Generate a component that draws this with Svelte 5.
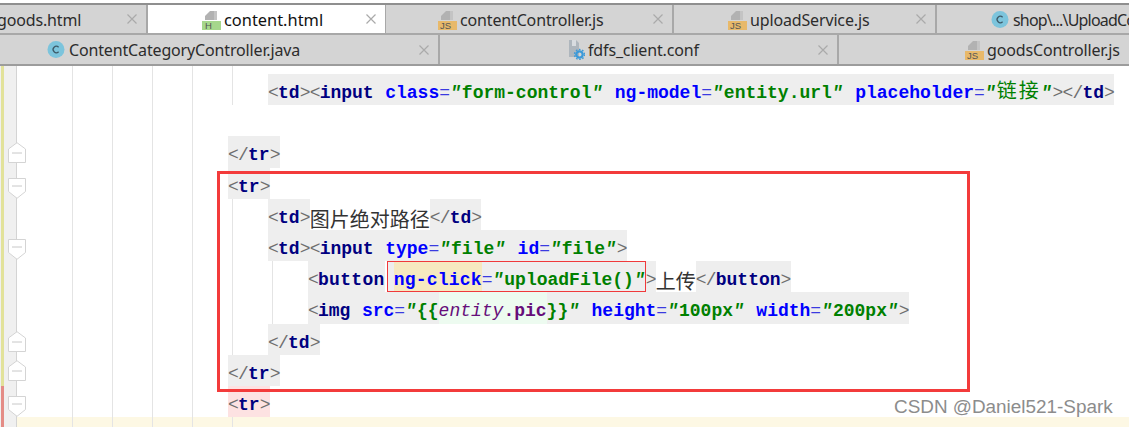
<script>
  const row1 = [
    { w: 148, pad: -3, name: 'goods.html', close: true },
    { w: 238, pad: 54, name: 'content.html', icon: 'H', close: true, active: true },
    { w: 288, pad: 52, name: 'contentController.js', icon: 'JS', close: true },
    { w: 263, pad: 54, name: 'uploadService.js', icon: 'JS', close: true },
    { w: 200, pad: 54, name: 'shop\\...\\UploadController.java', icon: 'C', tight: true }
  ];
  const row2 = [
    { w: 440, pad: 47, name: 'ContentCategoryController.java', icon: 'C', close: true },
    { w: 399, pad: 129, name: 'fdfs_client.conf', icon: 'G', close: true },
    { w: 300, pad: 126, name: 'goodsController.js', icon: 'JS' }
  ];

  const open = (n) => [['p', '<'], ['n', n]];
  const shut = (n) => [['p', '</'], ['n', n], ['p', '>']];
  const gt = ['p', '>'];
  const attr = (a, v) => [['a', a], ['e', '='], ['q', '"'], ['v', v], ['q', '"']];
  const sp = ['s', ' '];

  const lines = [
    { h: 8, g: 1 },
    { x: 241, g: 1, segs: [{ t: 'grey', toks: [['p', '<'], ['n', 'td'], gt, ['p', '<'], ['n', 'input'], sp, ...attr('class', 'form-control'), sp, ...attr('ng-model', 'entity.url'), sp, ['a', 'placeholder'], ['e', '='], ['q', '"'], ['vc', '链接'], ['q', '"'], gt, ...shut('td')] }] },
    { g: 0 },
    { x: 201, fold: 'up', segs: [{ t: 'grey', toks: shut('tr') }] },
    { x: 201, fold: 'down', segs: [{ t: 'grey', toks: [...open('tr'), gt] }] },
    { x: 241, g: 1, segs: [{ t: 'grey', toks: [...open('td'), gt] }, { t: 'plain', toks: [['c', '图片绝对路径']] }, { t: 'grey', toks: shut('td') }] },
    { x: 241, g: 1, fold: 'down2', segs: [{ t: 'grey', toks: [...open('td'), gt, ...open('input'), sp, ...attr('type', 'file'), sp, ...attr('id', 'file'), gt] }] },
    { x: 281, g: 2, segs: [
      { t: 'grey', toks: [['p', '<'], ['nw', 'button']] },
      { t: 'match', parts: [{ t: 'grey', toks: [sp] }, { t: 'hit', toks: [['a', 'ng-click']] }, { t: 'grey', toks: attr('', 'uploadFile()').slice(1) }] },
      { t: 'grey', toks: [gt] },
      { t: 'plain', toks: [['c', '上传']] },
      { t: 'grey', toks: shut('button') }
    ] },
    { x: 281, g: 2, segs: [
      { t: 'grey', toks: [...open('img'), sp, ['a', 'src'], ['e', '='], ['q', '"'], ['v', '{{']] },
      { t: 'mint', toks: [['i', 'entity'], ['k', '.pic']] },
      { t: 'grey', toks: [['v', '}}'], ['q', '"'], sp, ...attr('height', '100px'), sp, ...attr('width', '200px'), gt] }
    ] },
    { x: 241, g: 1, fold: 'up2', segs: [{ t: 'grey', toks: shut('td') }] },
    { x: 201, g: 1, fold: 'up3', segs: [{ t: 'grey', toks: shut('tr') }] },
    { x: 201, g: 1, pink: true, fold: 'down3', segs: [{ t: 'pinkbg', toks: [...open('tr'), gt] }] },
    { g: 1, pink: true, cur: true, h: 12 }
  ];
</script>

{#snippet fileicon(kind)}
  {#if kind === 'C'}
    <svg class="ic" width="19" height="19" viewBox="0 0 19 19"><circle cx="9" cy="9.5" r="8.5" fill="#7cc4dc" /><path d="M11.6 7.2a3.2 3.2 0 1 0 0 4.6" fill="none" stroke="#3d5a68" stroke-width="1.3" /></svg>
  {:else if kind === 'G'}
    <svg class="ic" width="16" height="20" viewBox="0 0 16 20"><path d="M0 0h7l3 3v14H0z" fill="#aeb6bd" /><path d="M3 0h4v6H3z" fill="#d8dce0" /><circle cx="10.500" cy="14.500" r="3.200" fill="none" stroke="#3b9ad9" stroke-width="2.300" /><circle cx="10.500" cy="14.500" r="5" fill="none" stroke="#3b9ad9" stroke-width="1.400" stroke-dasharray="1.600 1.600" /></svg>
  {:else}
    <svg class="ic" width="19" height="20" viewBox="0 0 19 20"><path d="M3 10V6l5-5h4v9z" fill="#b2b2b2" /><path d="M12 1h3v9h-3z" fill="#c4c4c4" /><rect y="11" width="19" height="9" fill={kind === 'H' ? '#a6d78c' : '#e8b96a'} /><text x={kind === 'H' ? 3 : 2} y="18.6" class="ict">{kind}</text></svg>
  {/if}
{/snippet}

{#snippet tab(t)}
  <div class="tab" class:active={t.active} class:tight={t.tight} style="width:{t.w}px">
    <div class="label" style="margin-left:{t.pad}px">
      {#if t.icon}{@render fileicon(t.icon)}{/if}
      <span>{t.name}</span>
    </div>
    {#if t.close}
      <svg class="x" width="10" height="10" viewBox="0 0 10 10"><path d="M.5.5l9 9M9.5.5l-9 9" stroke="#aaa" stroke-width="1.2" /></svg>
    {/if}
  </div>
{/snippet}

{#snippet toks(list)}
  {#each list as [c, s]}<span class={c}>{s}</span>{/each}
{/snippet}

<div class="page">
  <div class="tabs">
    <div class="tabrow first">
      {#each row1 as t}{@render tab(t)}{/each}
    </div>
    <div class="tabrow second">
      {#each row2 as t}{@render tab(t)}{/each}
    </div>
  </div>

  <div class="editor">
    {#each lines as l}
      <div class="row" class:cur={l.cur} style={l.h ? `height:${l.h}px` : ''}>
        <div class="gutter" class:pink={l.pink}>
          {#if l.fold}
            <svg class="fold {l.fold}" width="18" height="21" viewBox="0 0 18 21">
              {#if l.fold.startsWith('up')}
                <path d="M.5 20.5V7L9 .7 17.5 7v13.5z" fill="#fff" stroke="#d4d4d4" />
              {:else}
                <path d="M.5.5v13L9 20.3l8.500-6.800V.5z" fill="#fff" stroke="#d4d4d4" />
              {/if}
              <path d={l.fold.startsWith('up') ? 'M4 11h10' : 'M4 8h10'} stroke="#c8c8c8" />
            </svg>
          {/if}
        </div>
        <div class="code g{l.g ?? 1}" style={l.x ? `padding-left:${l.x}px` : ''}>
          {#each l.segs ?? [] as s}
            {#if s.t === 'match'}
              <span class="match">
                {#each s.parts as p}<span class="seg {p.t}">{@render toks(p.toks)}</span>{/each}
              </span>
            {:else}
              <span class="seg {s.t}">{@render toks(s.toks)}</span>
            {/if}
          {/each}
        </div>
      </div>
    {/each}
  </div>

  <div class="redbox"></div>
  <div class="mark">CSDN @Daniel521-Spark</div>
</div>

<style>
  :global(body) { margin: 0; background: #fff; }
  .page {
    position: relative;
    width: 1129px;
    height: 427px;
    overflow: hidden;
    background: #fff;
    padding-top: 3px;
    box-sizing: border-box;
  }
  .tabs { border-top: 2px solid #8f8f8f; border-bottom: 2px solid #9c9c9c; background: #d4d4d4; }
  .tabrow { display: flex; height: 30px; box-sizing: border-box; }
  .first { height: 30px; border-bottom: 2px solid #a8a8a8; }
  .first .label { padding-top: 1px; }
  .second { height: 29px; }
  .tab {
    flex: none;
    display: flex;
    align-items: center;
    box-sizing: border-box;
    padding-right: 9px;
    border-right: 2px solid #a8a8a8;
    background: #d4d4d4;
    font: 16px "Noto Sans", sans-serif;
    letter-spacing: -0.15px;
    color: #2c2c2c;
    white-space: nowrap;
  }
  .tab.active { background: #fff; color: #111; border-right: 1px solid #a8a8a8; font-size: 16.400px; letter-spacing: 0; }
  .tab.tight { letter-spacing: -0.8px; }
  .label { display: flex; align-items: center; gap: 3px; }
  .ic { flex: none; }
  .ict { font: 9.500px "Liberation Sans", sans-serif; fill: #555; letter-spacing: 0; }
  .x { margin-left: auto; flex: none; }

  .row { display: flex; height: 31.2px; }
  .gutter {
    position: relative;
    flex: none;
    width: 27px;
    box-sizing: border-box;
    background:
      linear-gradient(#e2e29a, #e2e29a) 1px 0 / 3px 100% no-repeat,
      linear-gradient(#d4d4d4, #d4d4d4) 16px 0 / 1px 100% no-repeat,
      linear-gradient(#f0f0f0, #f0f0f0) 0 0 / 16px 100% no-repeat;
  }
  .gutter.pink {
    background:
      linear-gradient(#e48c86, #e48c86) 1px 0 / 3px 100% no-repeat,
      linear-gradient(#d4d4d4, #d4d4d4) 16px 0 / 1px 100% no-repeat,
      linear-gradient(#f0f0f0, #f0f0f0) 0 0 / 16px 100% no-repeat;
  }
  .cur .gutter { background-color: #fdf8e4; }
  .fold { position: absolute; left: 8px; top: 6px; }
  .fold.down { top: 10px; }
  .fold.down2 { top: 9px; }
  .fold.down3 { top: 10px; }
  .fold.up2 { top: 7px; }
  .fold.up3 { top: 5px; }

  .code {
    flex: 1;
    display: flex;
    font: bold 18px "Liberation Mono", "Noto Sans CJK SC", monospace;
    white-space: pre;
    --l: linear-gradient(#e4e4e4, #e4e4e4);
    background-repeat: no-repeat;
    background-size: 1px 100%;
    background-image: var(--l), var(--l), var(--l), var(--l);
    background-position: 45px 0, 85px 0, 125px 0, 165px 0;
  }
  .g1 {
    background-image: var(--l), var(--l), var(--l), var(--l), var(--l);
    background-position: 45px 0, 85px 0, 125px 0, 165px 0, 205px 0;
  }
  .g2 {
    background-image: var(--l), var(--l), var(--l), var(--l), var(--l), var(--l);
    background-position: 45px 0, 85px 0, 125px 0, 165px 0, 205px 0, 245px 0;
  }
  .cur .code { background-color: #fdf8e4; }

  .seg { display: block; height: 31.2px; line-height: 39.400px; }
  .grey { background: #eeeeee; }
  .plain { background: #fff; }
  .pinkbg { background: #fde2e2; }
  .hit { background: #f6e9c0; letter-spacing: 0.2px; }
  .mint { background: #edfbf0; }
  .match { display: flex; position: relative; margin-left: 2px; }
  .match .s { letter-spacing: -3.800px; }
  .match::after {
    content: "";
    position: absolute;
    inset: 0;
    border: 1px solid #f0393b;
  }

  .s { letter-spacing: 0.700px; }
  .p { color: #6e6e6e; font-weight: 400; letter-spacing: -0.8px; }
  .n { color: #000080; }
  .nw { color: #000080; letter-spacing: 0.3px; }
  .a { color: #0000ff; }
  .e { color: #3a3ae0; font-weight: 400; }
  .v { color: #008000; }
  .vc { color: #008000; font-weight: 400; font-size: 20px; line-height: 0; font-family: "Noto Sans CJK SC", sans-serif; letter-spacing: 2px; }
  .q { color: #008000; font-style: italic; letter-spacing: 1px; }
  .c { color: #333; font-weight: 400; font-size: 20px; font-family: "Noto Sans CJK SC", sans-serif; }
  .i { color: #660e7a; font-style: italic; font-weight: 400; }
  .k { color: #660e7a; }

  .redbox {
    position: absolute;
    left: 217px;
    top: 171px;
    width: 753px;
    height: 221px;
    box-sizing: border-box;
    border: 3.500px solid #f33b3b;
  }
  .mark {
    position: absolute;
    left: 894px;
    top: 396px;
    font: 18.900px "Liberation Sans", sans-serif;
    color: #8c8c8c;
    white-space: nowrap;
  }
</style>
